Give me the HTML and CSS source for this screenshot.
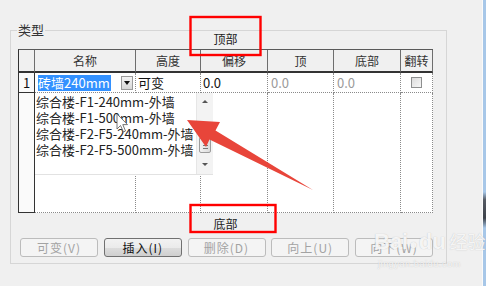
FILE: index.html
```html
<!DOCTYPE html>
<html lang="zh-CN">
<head>
    <meta charset="UTF-8">
    <meta name="viewport" content="width=device-width, initial-scale=1.0">
    <title>类型</title>
    <link rel="stylesheet" href="styles.css">
</head>
<body>
    <div class="window">
        <div class="dialog">
            <div class="group">
                <span class="group-title">类型</span>
                <div class="caption caption-top">顶部</div>

                <div class="grid">
                    <div class="th num"></div>
                    <div class="th">名称</div>
                    <div class="th">高度</div>
                    <div class="th">偏移</div>
                    <div class="th">顶</div>
                    <div class="th">底部</div>
                    <div class="th">翻转</div>

                    <div class="td num">1</div>
                    <div class="td name">
                        <span class="sel">砖墙240mm</span>
                        <span class="drop-btn"></span>
                    </div>
                    <div class="td">可变</div>
                    <div class="td">0.0</div>
                    <div class="td muted">0.0</div>
                    <div class="td muted">0.0</div>
                    <div class="td center"><span class="check"></span></div>

                    <div class="td num"></div>
                    <div class="td"></div>
                    <div class="td"></div>
                    <div class="td"></div>
                    <div class="td"></div>
                    <div class="td"></div>
                    <div class="td"></div>

                    <!-- open combo list -->
                    <div class="dropdown">
                        <ul class="items">
                            <li>综合楼-F1-240mm-外墙</li>
                            <li>综合楼-F1-500mm-外墙</li>
                            <li>综合楼-F2-F5-240mm-外墙</li>
                            <li>综合楼-F2-F5-500mm-外墙</li>
                        </ul>
                        <div class="scrollbar">
                            <span class="arrow up"></span>
                            <span class="thumb"></span>
                            <span class="arrow down"></span>
                        </div>
                    </div>
                </div>

                <div class="caption caption-bottom">底部</div>

                <div class="buttons">
                    <button class="btn" disabled>可变(V)</button>
                    <button class="btn">插入(I)</button>
                    <button class="btn" disabled>删除(D)</button>
                    <button class="btn" disabled>向上(U)</button>
                    <button class="btn" disabled>向下(W)</button>
                </div>
            </div>
        </div>
        <div class="edge"></div>
    </div>

    <!-- annotations drawn over the screenshot -->
    <svg class="overlay" width="486" height="286" viewBox="0 0 486 286">
        <rect x="190.5" y="17" width="70" height="38" fill="none" stroke="#ff0000" stroke-width="2.4"/>
        <rect x="190.5" y="205" width="85" height="27" fill="none" stroke="#ff0000" stroke-width="2.4"/>
        <path d="M117 114 L117 129 L120.5 125.5 L123.5 132 L125.5 131 L122.8 124.6 L127.5 124.6 Z" fill="#fff" stroke="#666" stroke-width="0.9"/>
        <polygon points="187,120 220,122 215.5,130.5 313,190 209.5,139.5 206,147" fill="#e8453a"/>
    </svg>

    <div class="watermark">
        <div class="wm-logo"><span class="wm-bai">Bai</span><span class="wm-paw">&#9679;</span><span class="wm-du">du</span><span class="wm-cn">经验</span></div>
        <div class="wm-url">jingyan.baidu.com</div>
    </div>
</body>
</html>
```

FILE: styles.css
```css
/* Base */
* {
    box-sizing: border-box;
}

body {
    margin: 0;
    width: 486px;
    height: 286px;
    overflow: hidden;
    position: relative;
    background-color: #f0f0f0;
    font-family: "Noto Sans CJK SC", "Noto Sans", sans-serif;
    color: #222;
}

.window {
    display: flex;
    height: 286px;
}

.dialog {
    flex: 1;
}

.edge {
    width: 4px;
    border-left: 1px solid #fafafa;
    background: linear-gradient(to bottom, #a7c7e8 0, #a7c7e8 192px, #555a63 200px, #3d424a 218px, #a7c7e8 228px, #a7c7e8 100%);
}

/* Group box */
.group {
    position: relative;
    width: 437px;
    margin: 30px 0 0 10px;
    padding: 0 0 6px 7px;
    border: 1px solid #d6d6d6;
}

.group-title {
    position: absolute;
    top: -8px;
    left: 6px;
    padding: 0 1px;
    font-size: 13px;
    line-height: 14px;
    background-color: #f0f0f0;
    color: #333;
}

.caption {
    width: 415px;
    text-align: center;
    font-size: 12px;
    color: #222;
}

.caption-top {
    height: 16px;
    line-height: 16px;
    margin-bottom: 2px;
}

.caption-bottom {
    height: 22px;
    line-height: 22px;
    margin-bottom: 3px;
}

/* Grid */
.grid {
    position: relative;
    display: grid;
    width: 415px;
    grid-template-columns: 16px 101px 65px 67px 66px 67px 32px;
    grid-template-rows: 23px 20px 120px;
    border-top: 1px solid #5a5a5a;
    border-left: 1px solid #333;
}

.th {
    border-right: 1px solid #6e6e6e;
    border-bottom: 2px solid #333;
    background-color: #f0f0f0;
    font-size: 12px;
    line-height: 21px;
    text-align: center;
    color: #333;
}

.td {
    border-right: 1px dotted #8a8a8a;
    border-bottom: 1px dotted #8a8a8a;
    background-color: #fff;
    font-size: 13px;
    line-height: 19px;
    padding-left: 2px;
    color: #111;
}

.td.num {
    border-right: 1px solid #333;
    border-bottom: 1px solid #333;
    background-color: #fafafa;
    padding-left: 4px;
}

.td.muted {
    color: #9a9a9a;
    padding-left: 3px;
}

.td.center {
    display: flex;
    align-items: center;
    justify-content: center;
    padding-left: 0;
}

.td.name {
    display: flex;
    align-items: center;
    justify-content: space-between;
    padding: 0 2px 0 3px;
}

.sel {
    background-color: #3391ff;
    color: #fff;
    line-height: 16px;
    padding-right: 1px;
}

.drop-btn {
    position: relative;
    width: 12px;
    height: 14px;
    border: 1px solid #9a9a9a;
    background: linear-gradient(#f4f4f4, #d6d6d6);
}

.drop-btn::after {
    content: "";
    position: absolute;
    left: 2px;
    top: 4px;
    border-left: 3.5px solid transparent;
    border-right: 3.5px solid transparent;
    border-top: 4px solid #111;
}

.check {
    width: 11px;
    height: 11px;
    border: 1px solid #8e8f8f;
    background: linear-gradient(135deg, #dcdcdc, #f6f6f6);
}

/* Open combo list */
.dropdown {
    position: absolute;
    left: 16px;
    top: 43px;
    width: 178px;
    height: 82px;
    display: flex;
    background-color: #fff;
    border-bottom: 1px solid #e2e2e2;
}

.items {
    flex: 1;
    margin: 0;
    padding: 1px 0 0 1px;
    list-style: none;
    font-size: 13px;
    line-height: 16px;
    color: #222;
    white-space: nowrap;
    overflow: hidden;
}

.scrollbar {
    position: relative;
    width: 17px;
    background-color: #f3f3f3;
    border-left: 1px solid #e6e6e6;
}

.arrow {
    position: absolute;
    left: 5px;
    border-left: 3px solid transparent;
    border-right: 3px solid transparent;
}

.arrow.up {
    top: 7px;
    border-bottom: 3px solid #555;
}

.arrow.down {
    bottom: 8px;
    border-top: 3px solid #555;
}

.thumb {
    position: absolute;
    left: 2px;
    top: 44px;
    width: 12px;
    height: 16px;
    border: 1px solid #9c9c9c;
    border-radius: 2px;
    background:
        linear-gradient(#777, #777) 3px 4px / 5px 1px no-repeat,
        linear-gradient(#777, #777) 3px 7px / 5px 1px no-repeat,
        linear-gradient(#777, #777) 3px 10px / 5px 1px no-repeat,
        linear-gradient(to right, #f2f2f2, #dcdcdc);
}

/* Buttons */
.buttons {
    display: flex;
    justify-content: space-between;
    width: 413px;
    margin-left: 2px;
}

.btn {
    width: 78px;
    height: 19px;
    padding: 0;
    border: 1px solid #707070;
    border-radius: 3px;
    background: linear-gradient(#f2f2f2 0, #ebebeb 50%, #dddddd 51%, #cfcfcf 100%);
    font-family: inherit;
    font-size: 12px;
    letter-spacing: 1px;
    color: #111;
}

.btn:disabled {
    border-color: #bcbcbc;
    background: #f4f4f4;
    color: #a3a3a3;
}

/* Annotations */
.overlay {
    position: absolute;
    left: 0;
    top: 0;
    pointer-events: none;
}

.watermark {
    position: absolute;
    left: 374px;
    top: 226px;
    color: rgba(255, 255, 255, 0.85);
    text-shadow: 0 0 1px rgba(150, 150, 150, 0.6);
    font-family: "Liberation Sans", "Noto Sans CJK SC", sans-serif;
    pointer-events: none;
}

.wm-logo {
    display: flex;
    align-items: baseline;
    line-height: 30px;
}

.wm-bai, .wm-du {
    font-size: 22px;
    font-weight: bold;
}

.wm-paw {
    font-size: 14px;
    margin: 0 1px;
}

.wm-cn {
    font-family: "Noto Sans CJK SC", sans-serif;
    font-size: 18px;
    margin-left: 4px;
}

.wm-url {
    font-size: 9px;
    line-height: 10px;
    letter-spacing: 0.6px;
    margin-left: 4px;
}
```
